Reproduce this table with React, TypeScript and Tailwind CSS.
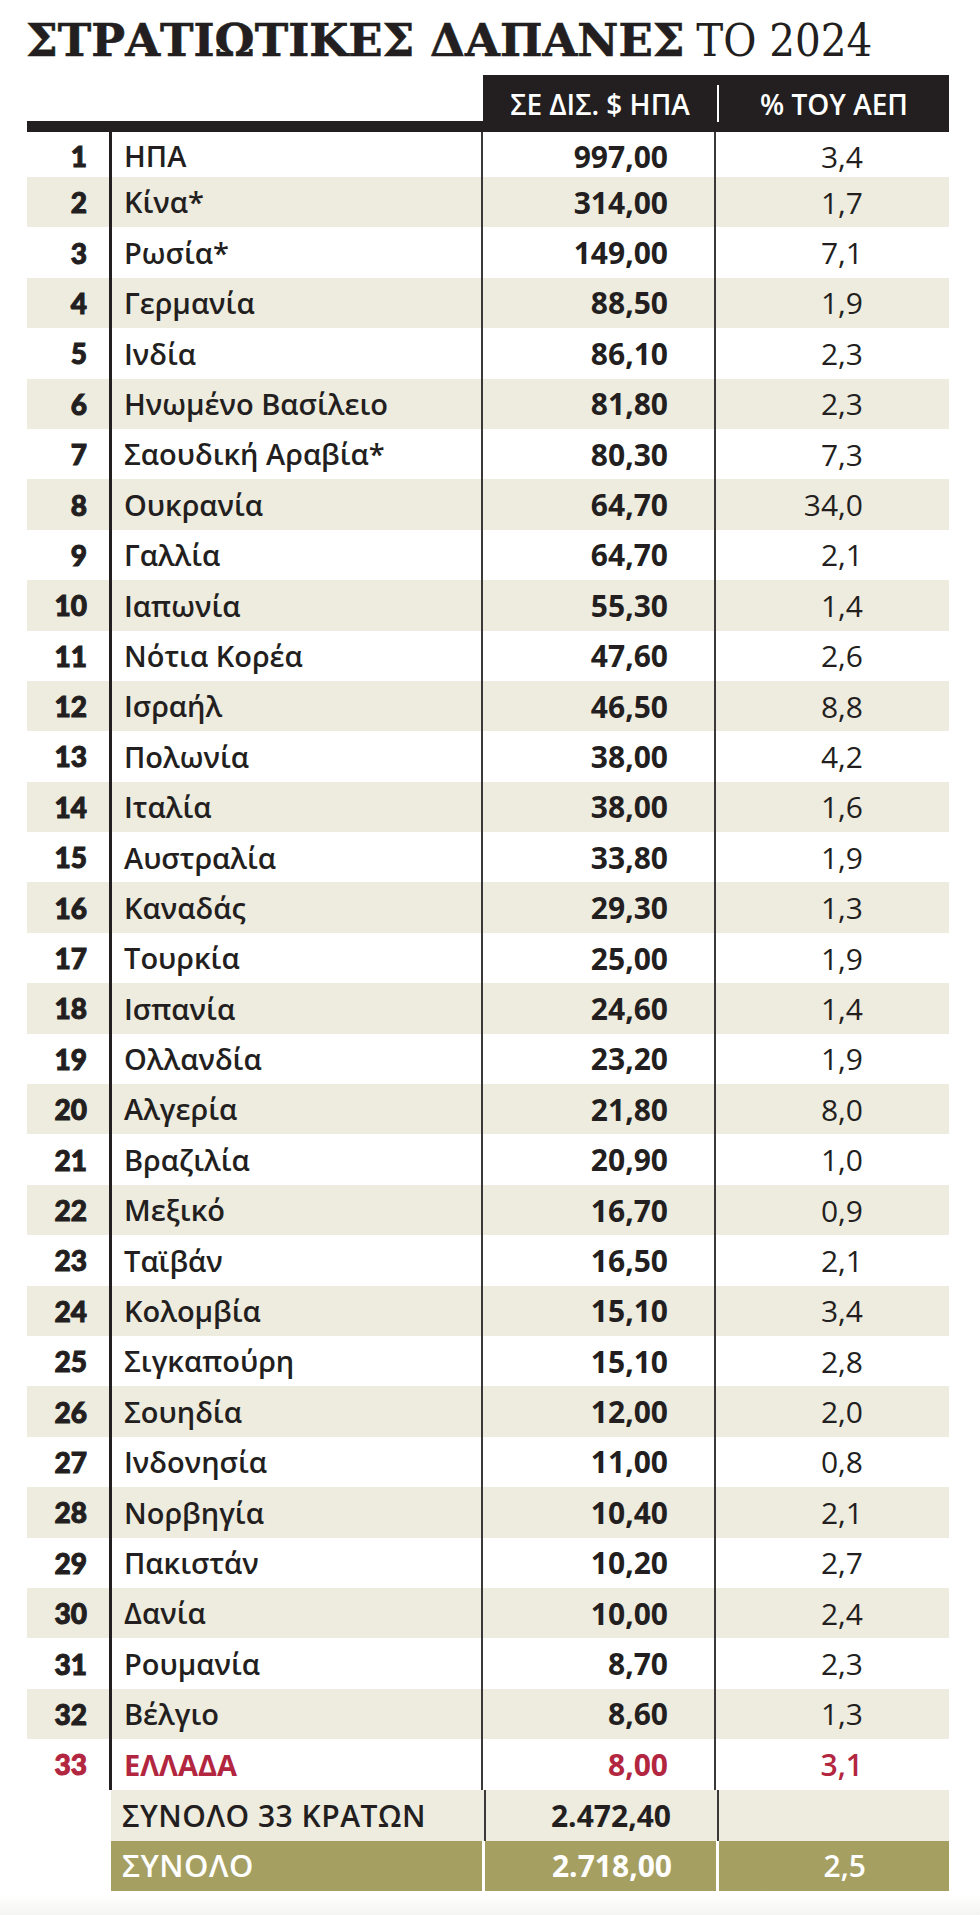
const ROWS: [string, string, string][] = [
  ["ΗΠΑ", "997,00", "3,4"],
  ["Κίνα*", "314,00", "1,7"],
  ["Ρωσία*", "149,00", "7,1"],
  ["Γερμανία", "88,50", "1,9"],
  ["Ινδία", "86,10", "2,3"],
  ["Ηνωμένο Βασίλειο", "81,80", "2,3"],
  ["Σαουδική Αραβία*", "80,30", "7,3"],
  ["Ουκρανία", "64,70", "34,0"],
  ["Γαλλία", "64,70", "2,1"],
  ["Ιαπωνία", "55,30", "1,4"],
  ["Νότια Κορέα", "47,60", "2,6"],
  ["Ισραήλ", "46,50", "8,8"],
  ["Πολωνία", "38,00", "4,2"],
  ["Ιταλία", "38,00", "1,6"],
  ["Αυστραλία", "33,80", "1,9"],
  ["Καναδάς", "29,30", "1,3"],
  ["Τουρκία", "25,00", "1,9"],
  ["Ισπανία", "24,60", "1,4"],
  ["Ολλανδία", "23,20", "1,9"],
  ["Αλγερία", "21,80", "8,0"],
  ["Βραζιλία", "20,90", "1,0"],
  ["Μεξικό", "16,70", "0,9"],
  ["Ταϊβάν", "16,50", "2,1"],
  ["Κολομβία", "15,10", "3,4"],
  ["Σιγκαπούρη", "15,10", "2,8"],
  ["Σουηδία", "12,00", "2,0"],
  ["Ινδονησία", "11,00", "0,8"],
  ["Νορβηγία", "10,40", "2,1"],
  ["Πακιστάν", "10,20", "2,7"],
  ["Δανία", "10,00", "2,4"],
  ["Ρουμανία", "8,70", "2,3"],
  ["Βέλγιο", "8,60", "1,3"],
  ["ΕΛΛΑΔΑ", "8,00", "3,1"],
];

const sans = { fontFamily: "'Open Sans', 'Noto Sans', sans-serif" };
const heavy = { fontFamily: "Lato, 'Open Sans', sans-serif" };

function Row({ i, name, value, pct }: { i: number; name: string; value: string; pct: string }) {
  const striped = i % 2 === 1;
  const greece = i === 32;
  const first = i === 0;
  return (
    <div
      className={`flex ${first ? "h-[45px]" : "h-[50.4px]"} ${striped ? "bg-[#eeebdf]" : "bg-white"} ${
        greece ? "text-[#b3263f]" : "text-[#231f20]"
      }`}
    >
      <div
        className={`w-[82px] flex items-center justify-end pr-[22px] text-[28px] font-black [-webkit-text-stroke:1px_currentColor] ${
          first ? "pt-[3px]" : ""
        }`}
        style={heavy}
      >
        {i + 1}
      </div>
      <div
        className={`w-[372px] border-l-[3px] border-[#231f20] flex items-center pl-[12px] text-[29px] ${
          greece ? "font-bold" : "font-semibold"
        } ${first ? "pt-[3px]" : ""}`}
      >
        {name}
      </div>
      <div
        className={`w-[233px] border-l-[2px] border-[#3a3839] flex items-center justify-end pr-[46px] text-[30px] font-bold ${
          first ? "pt-[3px]" : ""
        }`}
      >
        {value}
      </div>
      <div
        className={`w-[232px] border-l-[2px] border-[#3a3839] flex items-center justify-end pr-[83px] text-[30px] ${
          greece ? "font-semibold" : "font-normal"
        } ${first ? "pt-[3px]" : ""}`}
      >
        {pct}
      </div>
    </div>
  );
}

export default function App() {
  return (
    <div className="w-[980px] h-[1915px] bg-white overflow-hidden" style={sans}>
      <div className="pl-[26px] pt-[16px] h-[75px] flex items-start">
        <h1 className="text-[45px] leading-none text-[#231f20] whitespace-nowrap">
          <span className="font-bold [-webkit-text-stroke:0.6px_#231f20]" style={{ fontFamily: "'DejaVu Serif', serif" }}>
            ΣΤΡΑΤΙΩΤΙΚΕΣ ΔΑΠΑΝΕΣ
          </span>{" "}
          <span className="font-normal" style={{ fontFamily: "'DejaVu Serif Condensed', 'DejaVu Serif', serif" }}>
            ΤΟ 2024
          </span>
        </h1>
      </div>

      <div className="ml-[27px] w-[922px]">
        <div className="flex h-[57px]">
          <div className="w-[456px] flex flex-col justify-end">
            <div className="h-[11px] bg-[#231f20]" />
          </div>
          <div className="flex-1 bg-[#231f20] flex items-center text-white text-[28px] font-semibold">
            <div className="w-[234px] text-center">ΣΕ ΔΙΣ. $ ΗΠΑ</div>
            <div className="w-[2px] h-[37px] bg-white" />
            <div className="flex-1 text-center">% ΤΟΥ ΑΕΠ</div>
          </div>
        </div>

        {ROWS.map(([name, value, pct], i) => (
          <Row key={i} i={i} name={name} value={value} pct={pct} />
        ))}

        <div className="flex h-[51px] ml-[84px] bg-[#eeebdf] text-[#231f20]">
          <div className="w-[373px] flex items-center pl-[11px] text-[30px] font-semibold tracking-[0.5px]">
            ΣΥΝΟΛΟ 33 ΚΡΑΤΩΝ
          </div>
          <div className="w-[233px] border-l-[2px] border-[#3a3839] flex items-center justify-end pr-[46px] text-[30px] font-bold">
            2.472,40
          </div>
          <div className="flex-1 border-l-[2px] border-[#3a3839]" />
        </div>

        <div className="flex h-[50px] ml-[84px] gap-[3px] text-white">
          <div className="w-[371px] bg-[#a69f62] flex items-center pl-[11px] text-[31px] font-semibold tracking-[0.5px]">
            ΣΥΝΟΛΟ
          </div>
          <div className="w-[231px] bg-[#a69f62] flex items-center justify-end pr-[44px] text-[30px] font-bold">
            2.718,00
          </div>
          <div className="flex-1 bg-[#a69f62] flex items-center justify-end pr-[83px] text-[30px] font-semibold">
            2,5
          </div>
        </div>
      </div>

      <div className="mt-[4px] h-[40px] bg-gradient-to-b from-white via-[#f4f4f2] to-[#e2e3e1]" />
    </div>
  );
}
